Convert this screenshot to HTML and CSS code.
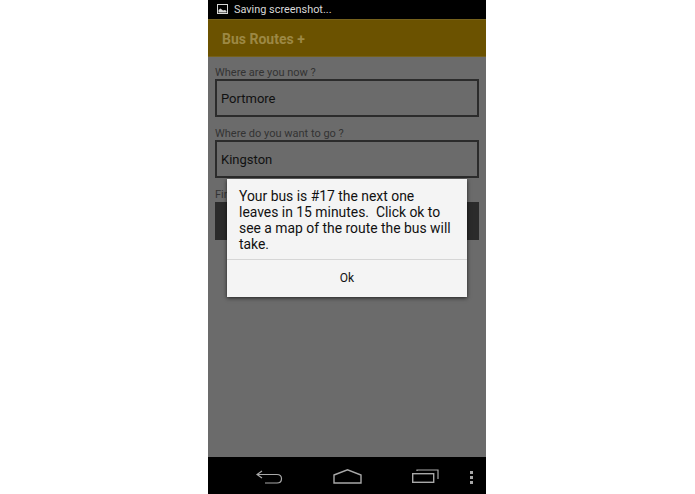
FILE: index.html
```html
<!DOCTYPE html>
<html lang="en">

<head>
    <meta charset="UTF-8">
    <meta name="viewport" content="width=device-width, initial-scale=1.0">
    <title>Bus Routes +</title>
    <link rel="stylesheet" href="styles.css">
</head>

<body>

    <div class="phone">
        <!-- Status bar -->
        <div class="status-bar">
            <svg class="status-icon" width="11" height="10" viewBox="0 0 11 10">
                <rect x="0.5" y="0.5" width="10" height="9" fill="none" stroke="#d8d8d8" stroke-width="1"/>
                <path d="M1.5 8.5 L1.5 6 L3.5 4.5 L6 6.5 L8 6 L9.5 7 L9.5 8.5 Z" fill="#d8d8d8"/>
            </svg>
            <span>Saving screenshot...</span>
        </div>

        <div class="action-bar">Bus Routes +</div>

        <div class="content">
            <label class="field-label">Where are you now ?</label>
            <div class="field">Portmore</div>
            <label class="field-label">Where do you want to go ?</label>
            <div class="field">Kingston</div>
            <label class="field-label">Find</label>
            <div class="find-button"></div>
        </div>

        <!-- Bottom navigation -->
        <div class="nav-bar">
            <svg class="nav-back" width="27" height="14" viewBox="0 0 27 14">
                <path d="M6 1 L1 4.5 L6 8 M1 4.5 L21 4.5 C27 4.5 27 13 21 13 L9 13" fill="none" stroke="#a8a8a8" stroke-width="1.2"/>
            </svg>
            <svg class="nav-home" width="29" height="15" viewBox="0 0 29 15">
                <path d="M1 6 L14.5 0.8 L28 6 L28 14 L1 14 Z" fill="none" stroke="#a8a8a8" stroke-width="1.4"/>
            </svg>
            <svg class="nav-recent" width="27" height="14" viewBox="0 0 27 14">
                <rect x="0.7" y="4.7" width="21" height="8.6" fill="none" stroke="#a8a8a8" stroke-width="1.4"/>
                <path d="M5 2 L5 1 L26 1 L26 10" fill="none" stroke="#a8a8a8" stroke-width="1.2"/>
            </svg>
            <div class="nav-dots"><i></i><i></i><i></i></div>
        </div>

        <!-- Dialog -->
        <div class="dialog">
            <p class="dialog-text">Your bus is #17 the next one<br>leaves in 15 minutes.&nbsp; Click ok to<br>see a map of the route the bus will<br>take.</p>
            <div class="dialog-button">Ok</div>
        </div>
    </div>

</body>

</html>
```

FILE: styles.css
```css
body {
    margin: 0;
    height: 494px;
    background: #ffffff;
    font-family: 'Roboto', 'Liberation Sans', sans-serif;
    overflow: hidden;
}

.phone {
    position: relative;
    width: 278px;
    height: 494px;
    margin-left: 208px;
    display: flex;
    flex-direction: column;
    background: #6b6b6b;
}

.status-bar {
    height: 18px;
    padding-bottom: 1px;
    background: #000000;
    color: #d8d8d8;
    font-size: 10.9px;
    display: flex;
    align-items: center;
    padding-left: 9px;
    gap: 6px;
}

.action-bar {
    height: 38px;
    box-sizing: border-box;
    background: #6b5200;
    border-top: 1px solid #75611c;
    border-bottom: 1px solid #75611c;
    color: #9c8844;
    font-size: 14px;
    font-weight: bold;
    line-height: 38px;
    padding-left: 14px;
}

.content {
    flex: 1;
    padding: 8px 7px 0 7px;
}

.field-label {
    display: block;
    color: #333333;
    font-size: 11px;
    line-height: 16px;
    margin-bottom: -2px;
}

.field {
    height: 38px;
    box-sizing: border-box;
    border: 2px solid #2b2b2b;
    color: #111111;
    font-size: 13px;
    line-height: 36px;
    padding-left: 4px;
    margin-bottom: 9px;
}

.find-button {
    height: 38px;
    margin-top: 1px;
    background: #2b2b2b;
}

.nav-bar {
    height: 37px;
    background: #000000;
    position: relative;
    display: flex;
    align-items: center;
}

.nav-back {
    margin-left: 48px;
    margin-top: 2px;
}

.nav-home {
    margin-left: 50px;
    margin-top: 1px;
}

.nav-recent {
    margin-left: 50px;
    margin-top: 1px;
}

.nav-dots {
    margin-left: 31px;
    margin-top: 3px;
    display: flex;
    flex-direction: column;
    gap: 2px;
}

.nav-dots i {
    display: block;
    width: 3px;
    height: 3px;
    background: #a8a8a8;
}

.dialog {
    position: absolute;
    left: 19px;
    top: 179px;
    width: 240px;
    height: 118px;
    background: #f4f4f4;
    box-shadow: 0 1px 4px rgba(0, 0, 0, 0.7);
    display: flex;
    flex-direction: column;
}

.dialog-text {
    margin: 0;
    height: 81px;
    flex-shrink: 0;
    box-sizing: border-box;
    padding: 9px 0 0 12px;
    border-bottom: 1px solid #d6d6d6;
    color: #111111;
    font-size: 13.9px;
    line-height: 16px;
}

.dialog-button {
    flex: 1;
    text-align: center;
    color: #111111;
    font-size: 12px;
    line-height: 37px;
}
```
